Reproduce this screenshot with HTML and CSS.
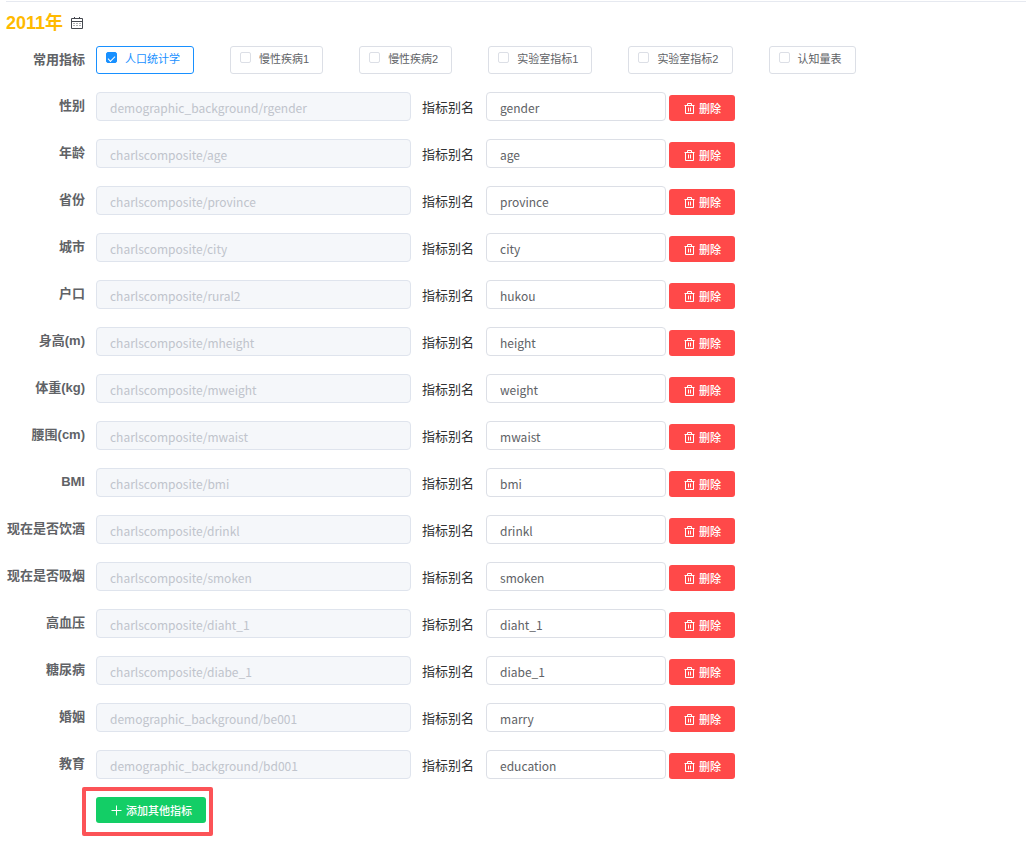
FILE: index.html
```html
<!DOCTYPE html>
<html lang="zh-CN">
<head>
<meta charset="utf-8">
<meta name="viewport" content="width=device-width, initial-scale=1">
<title>2011年</title>
<link rel="stylesheet" href="styles.css">
</head>
<body>
<svg class="sprite" aria-hidden="true">
  <symbol id="trash" viewBox="0 0 11 11"><path d="M.5 2.5h10M3.5 2.5v-2h4v2M1.5 2.5v8h8v-8M4.5 4.5v4M6.5 4.5v4" fill="none" stroke="currentColor"/></symbol>
</svg>
<main class="page">
  <header class="year">
    <h1 class="year-title">2011年</h1>
    <svg class="calendar" viewBox="0 0 12 12" aria-hidden="true"><path d="M.5 1.5h11v10H.5zM.5 4.5h11M3.5 0v2M8.5 0v2" fill="none" stroke="#45484f"/><path d="M2.5 6.5h7M2.5 8.5h7" fill="none" stroke="#606266" stroke-dasharray="1 2"/></svg>
  </header>
  <section class="line common">
    <span class="name">常用指标</span>
    <div class="groups">
      <label class="group active"><input class="tick" type="checkbox" checked>人口统计学</label>
      <label class="group"><input class="tick" type="checkbox">慢性疾病1</label>
      <label class="group"><input class="tick" type="checkbox">慢性疾病2</label>
      <label class="group"><input class="tick" type="checkbox">实验室指标1</label>
      <label class="group"><input class="tick" type="checkbox">实验室指标2</label>
      <label class="group"><input class="tick" type="checkbox">认知量表</label>
    </div>
  </section>
  <form class="rows">
    <div class="line"><label class="name" for="s1">性别</label><input class="field source" id="s1" value="demographic_background/rgender" disabled><label class="alias-label" for="a1">指标别名</label><input class="field alias" id="a1" value="gender"><button class="button delete" type="button"><svg class="icon"><use href="#trash"/></svg>删除</button></div>
    <div class="line"><label class="name" for="s2">年龄</label><input class="field source" id="s2" value="charlscomposite/age" disabled><label class="alias-label" for="a2">指标别名</label><input class="field alias" id="a2" value="age"><button class="button delete" type="button"><svg class="icon"><use href="#trash"/></svg>删除</button></div>
    <div class="line"><label class="name" for="s3">省份</label><input class="field source" id="s3" value="charlscomposite/province" disabled><label class="alias-label" for="a3">指标别名</label><input class="field alias" id="a3" value="province"><button class="button delete" type="button"><svg class="icon"><use href="#trash"/></svg>删除</button></div>
    <div class="line"><label class="name" for="s4">城市</label><input class="field source" id="s4" value="charlscomposite/city" disabled><label class="alias-label" for="a4">指标别名</label><input class="field alias" id="a4" value="city"><button class="button delete" type="button"><svg class="icon"><use href="#trash"/></svg>删除</button></div>
    <div class="line"><label class="name" for="s5">户口</label><input class="field source" id="s5" value="charlscomposite/rural2" disabled><label class="alias-label" for="a5">指标别名</label><input class="field alias" id="a5" value="hukou"><button class="button delete" type="button"><svg class="icon"><use href="#trash"/></svg>删除</button></div>
    <div class="line"><label class="name" for="s6">身高(m)</label><input class="field source" id="s6" value="charlscomposite/mheight" disabled><label class="alias-label" for="a6">指标别名</label><input class="field alias" id="a6" value="height"><button class="button delete" type="button"><svg class="icon"><use href="#trash"/></svg>删除</button></div>
    <div class="line"><label class="name" for="s7">体重(kg)</label><input class="field source" id="s7" value="charlscomposite/mweight" disabled><label class="alias-label" for="a7">指标别名</label><input class="field alias" id="a7" value="weight"><button class="button delete" type="button"><svg class="icon"><use href="#trash"/></svg>删除</button></div>
    <div class="line"><label class="name" for="s8">腰围(cm)</label><input class="field source" id="s8" value="charlscomposite/mwaist" disabled><label class="alias-label" for="a8">指标别名</label><input class="field alias" id="a8" value="mwaist"><button class="button delete" type="button"><svg class="icon"><use href="#trash"/></svg>删除</button></div>
    <div class="line"><label class="name" for="s9">BMI</label><input class="field source" id="s9" value="charlscomposite/bmi" disabled><label class="alias-label" for="a9">指标别名</label><input class="field alias" id="a9" value="bmi"><button class="button delete" type="button"><svg class="icon"><use href="#trash"/></svg>删除</button></div>
    <div class="line"><label class="name" for="s10">现在是否饮酒</label><input class="field source" id="s10" value="charlscomposite/drinkl" disabled><label class="alias-label" for="a10">指标别名</label><input class="field alias" id="a10" value="drinkl"><button class="button delete" type="button"><svg class="icon"><use href="#trash"/></svg>删除</button></div>
    <div class="line"><label class="name" for="s11">现在是否吸烟</label><input class="field source" id="s11" value="charlscomposite/smoken" disabled><label class="alias-label" for="a11">指标别名</label><input class="field alias" id="a11" value="smoken"><button class="button delete" type="button"><svg class="icon"><use href="#trash"/></svg>删除</button></div>
    <div class="line"><label class="name" for="s12">高血压</label><input class="field source" id="s12" value="charlscomposite/diaht_1" disabled><label class="alias-label" for="a12">指标别名</label><input class="field alias" id="a12" value="diaht_1"><button class="button delete" type="button"><svg class="icon"><use href="#trash"/></svg>删除</button></div>
    <div class="line"><label class="name" for="s13">糖尿病</label><input class="field source" id="s13" value="charlscomposite/diabe_1" disabled><label class="alias-label" for="a13">指标别名</label><input class="field alias" id="a13" value="diabe_1"><button class="button delete" type="button"><svg class="icon"><use href="#trash"/></svg>删除</button></div>
    <div class="line"><label class="name" for="s14">婚姻</label><input class="field source" id="s14" value="demographic_background/be001" disabled><label class="alias-label" for="a14">指标别名</label><input class="field alias" id="a14" value="marry"><button class="button delete" type="button"><svg class="icon"><use href="#trash"/></svg>删除</button></div>
    <div class="line"><label class="name" for="s15">教育</label><input class="field source" id="s15" value="demographic_background/bd001" disabled><label class="alias-label" for="a15">指标别名</label><input class="field alias" id="a15" value="education"><button class="button delete" type="button"><svg class="icon"><use href="#trash"/></svg>删除</button></div>
  </form>
  <div class="highlight">
    <button class="button add" type="button"><svg class="icon" viewBox="0 0 11 11"><path d="M.5 5.5h10M5.5.5v10" fill="none" stroke="currentColor"/></svg>添加其他指标</button>
  </div>
</main>
</body>
</html>
```

FILE: styles.css
```css
* {
  box-sizing: border-box;
}

body {
  margin: 0;
  background: #fff;
  color: #303133;
  font: 13px/20px "Liberation Sans", "Noto Sans CJK SC", sans-serif;
}

.sprite {
  display: none;
}

.page {
  margin: 1px 0 0 6px;
  border-top: 1px solid #e6e9f0;
}

.year {
  display: flex;
  align-items: center;
  gap: 8px;
  padding-top: 9px;
}

.year-title {
  margin: 0;
  color: #ffba00;
  font-size: 18px;
  line-height: 24px;
}

.calendar {
  width: 12px;
  height: 12px;
}

.line {
  display: flex;
  align-items: flex-end;
}

.common {
  align-items: center;
  margin: 11px 0 18px;
}

.name {
  flex: none;
  width: 79px;
  margin-right: 11px;
  color: #606266;
  font-weight: bold;
  text-align: right;
  white-space: nowrap;
}

.rows .name {
  align-self: flex-start;
  padding-top: 4px;
}

.groups {
  display: flex;
  gap: 36px;
}

.group {
  display: flex;
  align-items: flex-start;
  gap: 8px;
  height: 28px;
  padding: 5px 13px 0 9px;
  border: 1px solid #dcdfe6;
  border-radius: 3px;
  color: #606266;
  font-size: 11px;
  line-height: 14px;
  white-space: nowrap;
}

.group.active {
  border-color: #1890ff;
  color: #1890ff;
}

.tick {
  display: grid;
  appearance: none;
  width: 11px;
  height: 11px;
  margin: 0;
  border: 1px solid #dcdfe6;
  border-radius: 2px;
  background: #fff;
}

.tick:checked {
  border-color: #1890ff;
  background: #1890ff;
}

.tick:checked::after {
  place-self: center;
  width: 6px;
  height: 3px;
  border: solid #fff;
  border-width: 0 0 1px 1px;
  content: "";
  transform: rotate(-45deg);
}

.rows {
  display: grid;
  gap: 18px;
}

.field {
  height: 29px;
  padding: 2px 13px 0;
  border: 1px solid #dcdfe6;
  border-radius: 4px;
  background: #fff;
  color: #606266;
  font: 12px "Noto Sans CJK SC", sans-serif;
}

.source {
  flex: 0 1 315px;
  min-width: 120px;
}

.source:disabled {
  border-color: #dfe4ed;
  background: #f5f7fa;
  color: #c0c4cc;
}

.alias-label {
  flex: none;
  margin: 0 12px 3px 11px;
  white-space: nowrap;
}

.alias {
  flex: 0 1 180px;
  min-width: 80px;
}

.button {
  display: flex;
  flex: none;
  align-items: center;
  gap: 4px;
  height: 26px;
  padding: 0 14px 0 15px;
  border: 0;
  border-radius: 3px;
  color: #fff;
  font: 500 11px "Liberation Sans", "Noto Sans CJK SC", sans-serif;
}

.icon {
  width: 11px;
  height: 11px;
}

.delete {
  margin-left: 3px;
  background: #ff4949;
}

.add {
  background: #13ce66;
}

.highlight {
  width: fit-content;
  margin: 8px 0 0 76px;
  padding: 6px 3px 9px 10px;
  border: 4px solid #fc5357;
  border-radius: 2px;
}
```
